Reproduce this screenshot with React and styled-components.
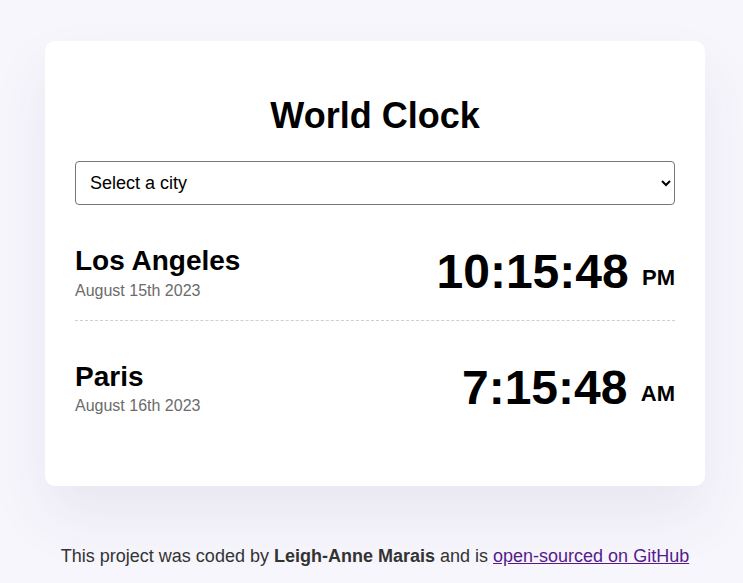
import React from 'react';
import styled, { createGlobalStyle } from 'styled-components';

const GlobalStyle = createGlobalStyle`
  body {
    margin: 0;
    background: #f7f6fc;
    font-family: "Liberation Sans", Arial, sans-serif;
  }
`;

const Page = styled.div`
  padding: 41px 0 0 7px;
  display: flex;
  flex-direction: column;
  align-items: center;
`;

const Card = styled.div`
  width: 660px;
  box-sizing: border-box;
  background: #fff;
  border-radius: 10px;
  padding: 53px 30px 51px;
  box-shadow: 0 30px 60px rgba(60, 50, 120, 0.08);
`;

const Title = styled.h1`
  margin: 0 0 24px;
  text-align: center;
  font-size: 36px;
  line-height: 1.2;
  font-weight: 700;
  color: #000;
`;

const Select = styled.select`
  display: block;
  width: 100%;
  height: 44px;
  box-sizing: border-box;
  padding: 0 10px;
  font-family: "Liberation Sans", Arial, sans-serif;
  font-size: 18px;
  color: #000;
  background: #fff;
  border: 1px solid #767676;
  border-radius: 4px;
`;

const Row = styled.div`
  display: flex;
  justify-content: space-between;
  align-items: center;
  padding: 38px 0 19px;
  border-bottom: ${(p) => (p.last ? 'none' : '1px dashed #cfcfcf')};
`;

const City = styled.div`
  display: flex;
  flex-direction: column;
  gap: 3px;
`;

const CityName = styled.h2`
  margin: 0;
  font-size: 28px;
  line-height: 1.2;
  font-weight: 700;
  color: #000;
`;

const CityDate = styled.div`
  font-size: 16px;
  line-height: 1.2;
  color: #6b6b6b;
`;

const Time = styled.div`
  font-size: 48px;
  line-height: 1.2;
  font-weight: 700;
  color: #000;
`;

const Meridiem = styled.span`
  font-size: 22px;
  vertical-align: 3px;
`;

const Footer = styled.footer`
  margin-top: 60px;
  font-size: 18px;
  line-height: 1.2;
  color: #333;
  text-align: center;

  a {
    color: #551a8b;
  }
`;

const cities = [
  { name: 'Los Angeles', date: 'August 15th 2023', time: '10:15:48', ampm: 'PM' },
  { name: 'Paris', date: 'August 16th 2023', time: '7:15:48', ampm: 'AM' },
];

export default function App() {
  return (
    <>
      <GlobalStyle />
      <Page>
        <Card>
          <Title>World Clock</Title>
          <Select defaultValue="">
            <option value="">Select a city</option>
            <option value="America/Los_Angeles">Los Angeles</option>
            <option value="Europe/Paris">Paris</option>
            <option value="Asia/Tokyo">Tokyo</option>
          </Select>
          <div>
            {cities.map((c, i) => (
              <Row key={c.name} last={i === cities.length - 1}>
                <City>
                  <CityName>{c.name}</CityName>
                  <CityDate>{c.date}</CityDate>
                </City>
                <Time>
                  {c.time} <Meridiem>{c.ampm}</Meridiem>
                </Time>
              </Row>
            ))}
          </div>
        </Card>
        <Footer>
          This project was coded by <strong>Leigh-Anne Marais</strong> and is{' '}
          <a href="#">open-sourced on GitHub</a>
        </Footer>
      </Page>
    </>
  );
}
